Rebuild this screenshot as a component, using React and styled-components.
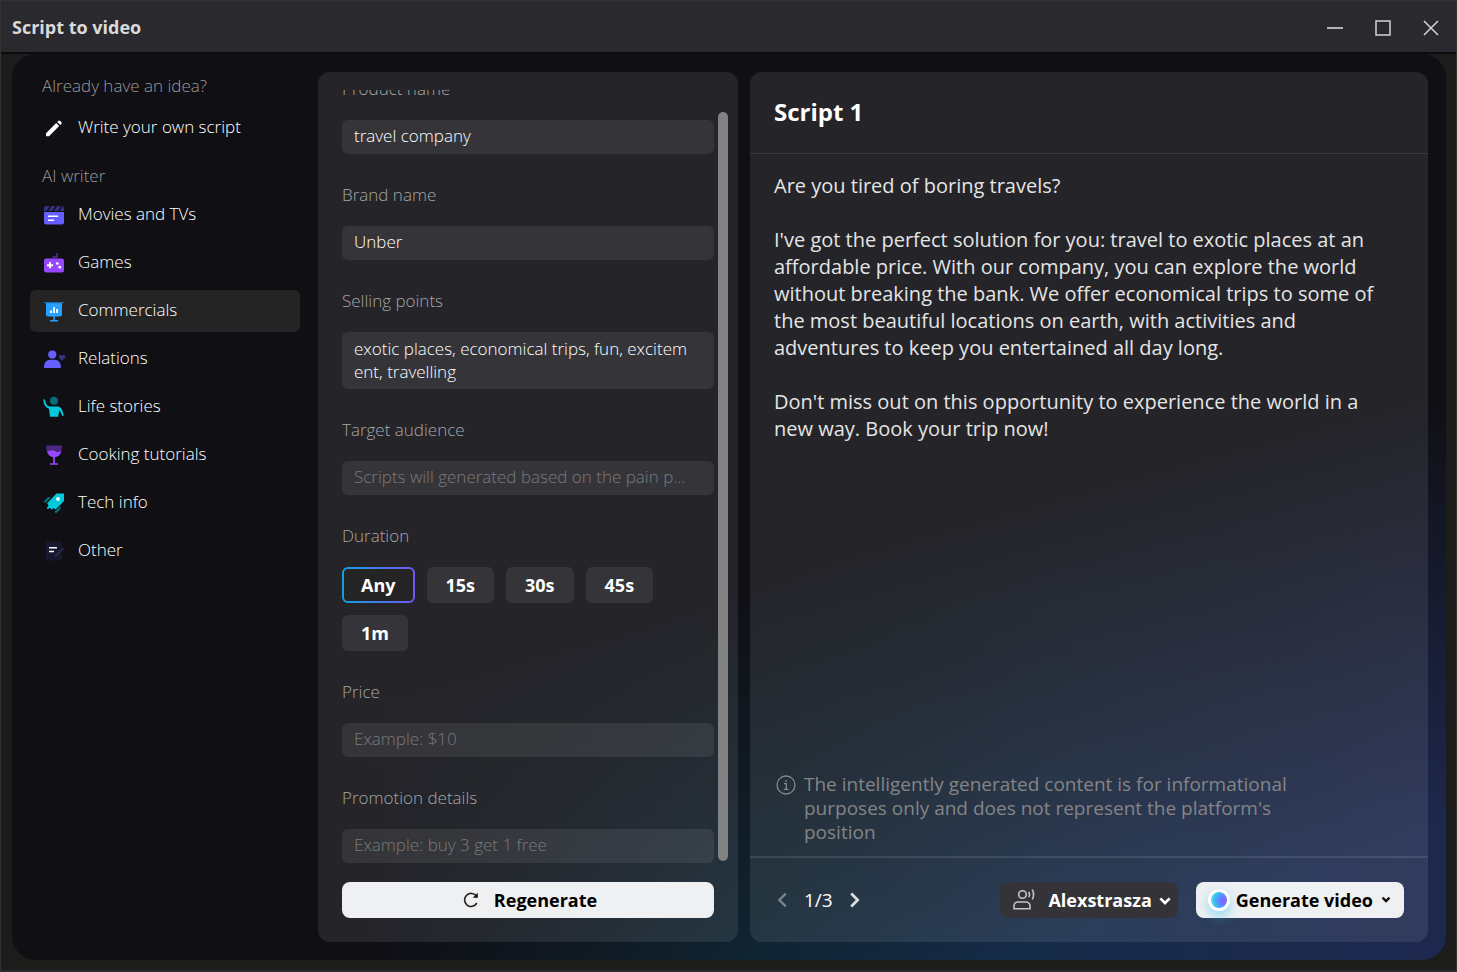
import React, { useLayoutEffect, useRef, useState } from 'react';
import styled, { createGlobalStyle, css } from 'styled-components';

const GlobalStyle = createGlobalStyle`
  * {
    box-sizing: border-box;
  }

  html, body, #root {
    height: 100%;
    margin: 0;
  }

  body {
    background: #1c1c1b;
    color: #fff;
    font-family: 'Open Sans', 'Noto Sans', sans-serif;
    font-size: 17px;
  }

  button, input, textarea {
    font-family: inherit;
  }
`;

/* icons */
const PencilIcon = () => (
  <svg width="24" height="24" viewBox="0 0 24 24" fill="#fff" aria-hidden="true">
    <path d="M4 17.200 14.200 7l3 3L7 20.200H4z" />
    <path d="m15.200 6 1-1a1.500 1.500 0 0 1 2.100 0l1 1a1.500 1.500 0 0 1 0 2.100l-1 1z" />
  </svg>
);

const MoviesIcon = () => (
  <svg width="24" height="24" viewBox="0 0 24 24" aria-hidden="true">
    <path fill="#363180" d="M4 3h3.6L4.6 8H2V5a2 2 0 0 1 2-2zM9.4 3h3.8l-3 5H6.4zM15 3h3.8l-3 5H12zM20.3 3A2 2 0 0 1 22 5v3h-4.4z" />
    <path fill="#655fff" d="M2 9h20v10.500a2 2 0 0 1-2 2H4a2 2 0 0 1-2-2z" />
    <path stroke="#fff" strokeWidth="1.600" d="M6 13.300h10M6 17.200h6" />
  </svg>
);

const GamesIcon = () => (
  <svg width="24" height="24" viewBox="0 0 24 24" aria-hidden="true">
    <path fill="none" stroke="#4b2780" strokeWidth="1.800" d="M11.500 8V5.800h3.600V2" />
    <rect x="2" y="7.500" width="20" height="14" rx="2.200" fill="#9747ff" />
    <path stroke="#fff" strokeWidth="2" d="M5 14.200h6M8 11.200v6" />
    <circle cx="15.300" cy="12.600" r="1.400" fill="#fff" />
    <circle cx="17.800" cy="16.200" r="1.400" fill="#fff" />
  </svg>
);

const CommercialsIcon = () => (
  <svg width="24" height="24" viewBox="0 0 24 24" aria-hidden="true">
    <path fill="#27a0ff" d="M4 3h16v12.500a2 2 0 0 1-2 2H6a2 2 0 0 1-2-2z" />
    <path fill="#1f6da8" d="M2 3h20v1.200H2z" />
    <path stroke="#fff" strokeWidth="1.800" d="M9 11.500V14M12 8v6M15 10v4" />
    <path stroke="#27a0ff" strokeWidth="1.500" d="M12 17v5M8 21.800h8" />
  </svg>
);

const RelationsIcon = () => (
  <svg width="24" height="24" viewBox="0 0 24 24" aria-hidden="true">
    <circle cx="10.300" cy="7.600" r="4.100" fill="#655fff" />
    <path fill="#655fff" d="M2 21v-1.500c0-3.700 2.500-6.800 6-6.800h4.800c3.500 0 6 3.100 6 6.800V21z" />
    <path fill="#363180" d="M20 13.700c-2-1.400-3.300-2.500-3.300-4.100 0-2 2.400-2.400 3.300-.8.900-1.600 3.300-1.200 3.300.8 0 1.600-1.300 2.700-3.300 4.100z" />
  </svg>
);

const StoriesIcon = () => (
  <svg width="24" height="24" viewBox="0 0 24 24" aria-hidden="true">
    <circle cx="12" cy="5.800" r="4" fill="#076b7a" />
    <path fill="#04c8dc" d="M1.300 4.700 3 4.200c.4 4 1.900 7 5 7.300h7.500c3.800.2 5 3.400 6.300 8.900l-1.700.5c-.9-2.900-1.600-4.700-2.800-5.700L16.200 21.800H8L7 13.700C3.300 12.400 1.500 9.300 1.300 4.700z" />
  </svg>
);

const CookingIcon = () => (
  <svg width="24" height="24" viewBox="0 0 24 24" aria-hidden="true">
    <path fill="#4b2780" d="M4 2.500h16l-.5 5.500c-3 1.500-5-.5-7.500-.5-3 0-5 1-7.500.3z" />
    <path fill="#9747ff" d="M5 7.700c2.600.9 4.600-1.200 7.400 0 2.400 1 4.400 1.400 6.900.3-.5 3.500-2.900 5.800-6.400 6.200v6.100H16v1.500H8v-1.500h3.200v-6.100C7.700 13.700 5.500 11.300 5 7.700z" />
  </svg>
);

const RocketIcon = () => (
  <svg width="24" height="24" viewBox="0 0 24 24" aria-hidden="true">
    <path fill="#076b7a" d="M1.500 10.500 6 6l3 .3L3.500 12zM18.500 15v3L14 22.500l-1.700-1.800z" />
    <path fill="#04c8dc" d="M14.500 2.500H22V10L13.600 18.500l-2-1.500-1.800 1.700-2-2-2 1.500-1-1.200L6.500 14.500l-1.400-2.300z" />
    <circle cx="16" cy="8" r="1.900" fill="#fff" />
  </svg>
);

const OtherIcon = () => (
  <svg width="24" height="24" viewBox="0 0 24 24" aria-hidden="true">
    <path fill="#16192e" d="M5.500 2.500h13A1.500 1.500 0 0 1 20 4v16a1.500 1.500 0 0 1-1.500 1.500h-13A1.500 1.500 0 0 1 4 20V4a1.500 1.500 0 0 1 1.500-1.500z" />
    <path stroke="#fff" strokeWidth="1.500" d="M7 8.800h8M7 12.600h5" />
    <path fill="#202748" stroke="#0f0f14" strokeWidth=".7" d="m11.500 19 .3-3 7.700-7.500a1.500 1.500 0 0 1 2 0l.6.600a1.500 1.500 0 0 1 0 2l-7.600 7.500z" />
  </svg>
);

const Chevron = ({ d, size = 24, width = 2, color = '#fff' }) => (
  <svg width={size} height={size} viewBox="0 0 24 24" fill="none" stroke={color} strokeWidth={width} aria-hidden="true">
    <path d={d} />
  </svg>
);

const categories = [
  { label: 'Movies and TVs', icon: MoviesIcon },
  { label: 'Games', icon: GamesIcon },
  { label: 'Commercials', icon: CommercialsIcon },
  { label: 'Relations', icon: RelationsIcon },
  { label: 'Life stories', icon: StoriesIcon },
  { label: 'Cooking tutorials', icon: CookingIcon },
  { label: 'Tech info', icon: RocketIcon },
  { label: 'Other', icon: OtherIcon },
];

const durations = ['Any', '15s', '30s', '45s', '1m'];

const paragraphs = [
  'Are you tired of boring travels?',
  "I've got the perfect solution for you: travel to exotic places at an affordable price. With our company, you can explore the world without breaking the bank. We offer economical trips to some of the most beautiful locations on earth, with activities and adventures to keep you entertained all day long.",
  "Don't miss out on this opportunity to experience the world in a new way. Book your trip now!",
];

const TextField = ({ id, label, ...rest }) => (
  <Field>
    <Label htmlFor={id}>{label}</Label>
    <Input id={id} type="text" {...rest} />
  </Field>
);

const App = () => {
  const [category, setCategory] = useState('Commercials');
  const [duration, setDuration] = useState('Any');
  const formRef = useRef(null);

  useLayoutEffect(() => {
    formRef.current.scrollTop = formRef.current.scrollHeight;
  }, []);

  return (
    <Window>
      <GlobalStyle />
      <TitleBar>
        <WindowTitle>Script to video</WindowTitle>
        <WindowControls>
          <IconButton aria-label="Minimize">
            <svg width="18" height="18" fill="none" stroke="#b4b4b6" strokeWidth="2"><path d="M1 9h16" /></svg>
          </IconButton>
          <IconButton aria-label="Maximize">
            <svg width="18" height="18" fill="none" stroke="#d4d4d6" strokeWidth="1.500"><path d="M2 2h14v14H2z" /></svg>
          </IconButton>
          <IconButton aria-label="Close">
            <svg width="18" height="18" fill="none" stroke="#d4d4d6" strokeWidth="1.500"><path d="m2 2 14 14M16 2 2 16" /></svg>
          </IconButton>
        </WindowControls>
      </TitleBar>

      <Main>
        <Sidebar>
          <SidebarHeading>Already have an idea?</SidebarHeading>
          <NavItem><PencilIcon /><span>Write your own script</span></NavItem>
          <SidebarHeading>AI writer</SidebarHeading>
          {categories.map(({ label, icon: Icon }) => (
            <NavItem key={label} $active={label === category} onClick={() => setCategory(label)}>
              <Icon /><span>{label}</span>
            </NavItem>
          ))}
        </Sidebar>

        <FormPanel>
          <ScrollArea>
            <Form ref={formRef}>
              <TextField id="product" label="Product name" defaultValue="travel company" />
              <TextField id="brand" label="Brand name" defaultValue="Unber" />
              <Field>
                <Label htmlFor="points">Selling points</Label>
                <TextArea id="points" rows="2" defaultValue="exotic places, economical trips, fun, excitement, travelling" />
              </Field>
              <TextField
                id="audience"
                label="Target audience"
                placeholder="Scripts will generated based on the pain points of the audience"
              />
              <Field>
                <Label as="span" id="duration">Duration</Label>
                <Options role="group" aria-labelledby="duration">
                  {durations.map(item => (
                    <Option
                      key={item}
                      $active={item === duration}
                      aria-pressed={item === duration}
                      onClick={() => setDuration(item)}
                    >
                      {item}
                    </Option>
                  ))}
                </Options>
              </Field>
              <TextField id="price" label="Price" placeholder="Example: $10" />
              <TextField id="promotion" label="Promotion details" placeholder="Example: buy 3 get 1 free" />
            </Form>
            <Track><Thumb /></Track>
          </ScrollArea>
          <RegenerateButton>
            <svg width="24" height="24" viewBox="0 0 24 24" fill="none" stroke="#222" strokeWidth="1.600" aria-hidden="true">
              <path d="M17.800 15A6.500 6.500 0 1 1 17.600 8.500" />
              <path fill="#111" stroke="none" d="M18.800 4.800v5h-5z" />
            </svg>
            Regenerate
          </RegenerateButton>
        </FormPanel>

        <ScriptPanel>
          <ScriptHeader>Script 1</ScriptHeader>
          <ScriptBody>
            {paragraphs.map(text => <p key={text}>{text}</p>)}
          </ScriptBody>
          <Notice>
            <svg width="20" height="20" viewBox="0 0 20 20" fill="none" stroke="#85898c" strokeWidth="1.300" aria-hidden="true">
              <circle cx="10" cy="10" r="9" />
              <path d="M8 8.700h2.300V14M7.800 14.300h4.600M9.200 6h1.600" />
            </svg>
            <span>The intelligently generated content is for informational purposes only and does not represent the platform's position</span>
          </Notice>
          <ScriptFooter>
            <Pager>
              <IconButton aria-label="Previous script"><Chevron d="m15 5-7 7 7 7" size={22} width={2.5} color="#7c8590" /></IconButton>
              <span>1/3</span>
              <IconButton aria-label="Next script"><Chevron d="m9 5 7 7-7 7" size={22} width={3} color="#dcdee0" /></IconButton>
            </Pager>
            <VoiceButton>
              <svg width="24" height="24" viewBox="0 0 24 24" fill="none" stroke="#c5c5c6" strokeWidth="1.600" aria-hidden="true">
                <circle cx="10.500" cy="6.500" r="3.800" />
                <path d="M2 20.800V18a4 4 0 0 1 4-4h8a4 4 0 0 1 4 4v2.800zM16.800 3.800a6 6 0 0 1 0 5.400M20.300 1.500a11 11 0 0 1 0 10" />
              </svg>
              Alexstrasza
              <Chevron d="m5 9.500 7 7 7-7" size={16} width={4} />
            </VoiceButton>
            <GenerateButton>
              <Orb />
              Generate video
              <Chevron d="m6 8 6 6 6-6" size={14} width={4} color="#111" />
            </GenerateButton>
          </ScriptFooter>
        </ScriptPanel>
      </Main>
    </Window>
  );
};

const buttonReset = css`
  border: 0;
  padding: 0;
  background: none;
  color: inherit;
  cursor: pointer;
`;

const Window = styled.div`
  display: flex;
  flex-direction: column;
  height: 100vh;
  min-height: 720px;
  border: 1px solid #323233;
  border-bottom: 2px solid #2c2a2b;
`;

const TitleBar = styled.header`
  display: flex;
  flex: none;
  align-items: center;
  justify-content: space-between;
  height: 53px;
  padding: 0 16px 0 11px;
  border-bottom: 2px solid #0b0b0d;
  background: #2a292e;
`;

const WindowTitle = styled.h1`
  margin: 0;
  color: #d9d9da;
  font-size: 18px;
  font-weight: 700;
`;

const WindowControls = styled.div`
  display: flex;
  gap: 30px;
  padding-top: 3px;
`;

const IconButton = styled.button`
  ${buttonReset}
  display: flex;
`;

const Main = styled.main`
  display: flex;
  flex: 1;
  min-height: 0;
  margin: 0 10px 10px 11px;
  padding: 18px;
  border-radius: 24px;
  background:
    linear-gradient(165deg, #0f0f14 56%, rgba(15, 15, 20, 0) 90%),
    linear-gradient(90deg, #0f0f14 24%, #102838 52%, #162b49 72%, #1e284f 100%);
`;

const Sidebar = styled.nav`
  display: flex;
  flex: none;
  flex-direction: column;
  gap: 6px;
  width: 270px;
  margin-right: 18px;
`;

const SidebarHeading = styled.h2`
  margin: 0;
  padding: 2px 12px 3px;
  color: #9a9a9c;
  font-size: 17px;
  font-weight: 300;
  line-height: 24px;

  &:not(:first-child) {
    padding: 9px 12px 0;
  }
`;

const NavItem = styled.button`
  ${buttonReset}
  display: flex;
  flex: none;
  align-items: center;
  gap: 12px;
  height: 42px;
  padding: 0 12px;
  border-radius: 6px;
  background: ${({ $active }) => ($active ? '#242425' : 'transparent')};
  color: #fff;
  font-size: 17px;
  font-weight: 300;

  span {
    padding-bottom: 4px;
  }
`;

const Panel = styled.section`
  display: flex;
  flex-direction: column;
  border-radius: 12px;
  background: rgba(255, 255, 255, .09);
`;

const FormPanel = styled(Panel)`
  flex: 0 0 420px;
  margin-right: 12px;
  padding: 18px 0 24px;
`;

const ScrollArea = styled.div`
  display: flex;
  flex: 1;
  gap: 4px;
  min-height: 0;
  padding: 0 10px 0 24px;
`;

const Form = styled.div`
  display: flex;
  flex: 1;
  flex-direction: column;
  gap: 29px;
  overflow-y: auto;
  padding: 12px 0 1px;
  scrollbar-width: none;
`;

const Field = styled.div`
  display: flex;
  flex: none;
  flex-direction: column;
  gap: 19px;
`;

const Label = styled.label`
  color: #a6a6a6;
  font-size: 17px;
  font-weight: 300;
  line-height: 24px;
`;

const controlStyle = css`
  width: 100%;
  border: 0;
  border-radius: 6px;
  outline: none;
  background: rgba(255, 255, 255, .08);
  color: #fff;
  font-size: 17px;
  font-weight: 300;

  &::placeholder {
    color: #7a7a7c;
    opacity: 1;
  }
`;

const Input = styled.input`
  ${controlStyle}
  height: 34px;
  padding: 0 24px 4px 12px;
  text-overflow: ellipsis;
`;

const TextArea = styled.textarea`
  ${controlStyle}
  display: block;
  height: 57px;
  padding: 5px 24px 5px 12px;
  overflow: hidden;
  line-height: 23px;
  resize: none;
  word-break: break-all;
`;

const Options = styled.div`
  display: flex;
  flex-wrap: wrap;
  gap: 12px;
  padding-right: 48px;
`;

const Option = styled.button`
  ${buttonReset}
  height: 36px;
  padding: 0 17px;
  border: 2px solid transparent;
  border-radius: 6px;
  background: ${({ $active }) => ($active
    ? 'linear-gradient(#242425, #242425) padding-box, linear-gradient(90deg, #149ee0, #7357f6) border-box'
    : 'rgba(255, 255, 255, .08) border-box')};
  color: #fff;
  font-size: 18px;
  font-weight: 700;
`;

const Track = styled.div`
  flex: none;
  width: 10px;
  padding: 22px 0 3px;
`;

const Thumb = styled.div`
  height: 100%;
  border-radius: 5px;
  background: #828283;
`;

const ActionButton = styled.button`
  ${buttonReset}
  display: flex;
  align-items: center;
  justify-content: center;
  height: 36px;
  border-radius: 8px;
  font-size: 18px;
  font-weight: 700;
  white-space: nowrap;
`;

const RegenerateButton = styled(ActionButton)`
  flex: none;
  gap: 11px;
  margin: 18px 24px 0;
  background: #eff0f2;
  color: #000;
`;

const ScriptPanel = styled(Panel)`
  flex: 1;
  min-width: 0;
`;

const ScriptHeader = styled.h2`
  margin: 0;
  padding: 24px 24px 25px;
  border-bottom: 1px solid rgba(255, 255, 255, .1);
  font-size: 24px;
  font-weight: 700;
  line-height: 32px;
`;

const ScriptBody = styled.div`
  flex: 1;
  min-height: 0;
  overflow-y: auto;
  padding: 18px 42px 18px 24px;
  color: #e4e4e5;
  font-size: 20px;
  line-height: 27px;

  p {
    margin: 0 0 27px;
  }
`;

const Notice = styled.p`
  display: flex;
  gap: 8px;
  max-width: 570px;
  margin: 0;
  padding: 0 26px 12px;
  color: #838586;
  font-size: 19px;
  line-height: 24px;

  svg {
    flex: none;
    margin-top: 3px;
  }
`;

const ScriptFooter = styled.footer`
  display: flex;
  align-items: center;
  gap: 18px;
  height: 86px;
  padding: 0 24px 0 22px;
  border-top: 2px solid rgba(255, 255, 255, .1);
`;

const Pager = styled.div`
  display: flex;
  align-items: center;
  gap: 10px;
  margin-right: auto;
  font-size: 19px;
`;

const VoiceButton = styled(ActionButton)`
  gap: 5px;
  padding: 0 5px 0 12px;
  background: #343338;
  color: #fff;

  svg:first-child {
    margin-right: 7px;
  }
`;

const GenerateButton = styled(ActionButton)`
  gap: 6px;
  padding: 0 11px 0 12px;
  background: #eff0f2;
  color: #000;
`;

const Orb = styled.span`
  width: 22px;
  height: 22px;
  border: 3px solid #fff;
  border-radius: 50%;
  background: radial-gradient(circle at 80% 55%, #8a5cff 0%, #5b8cff 35%, #33c8ee 65%, #a8ecfa 100%);
  box-shadow: 0 5px 12px rgba(40, 200, 240, .5);
`;

export default App;
